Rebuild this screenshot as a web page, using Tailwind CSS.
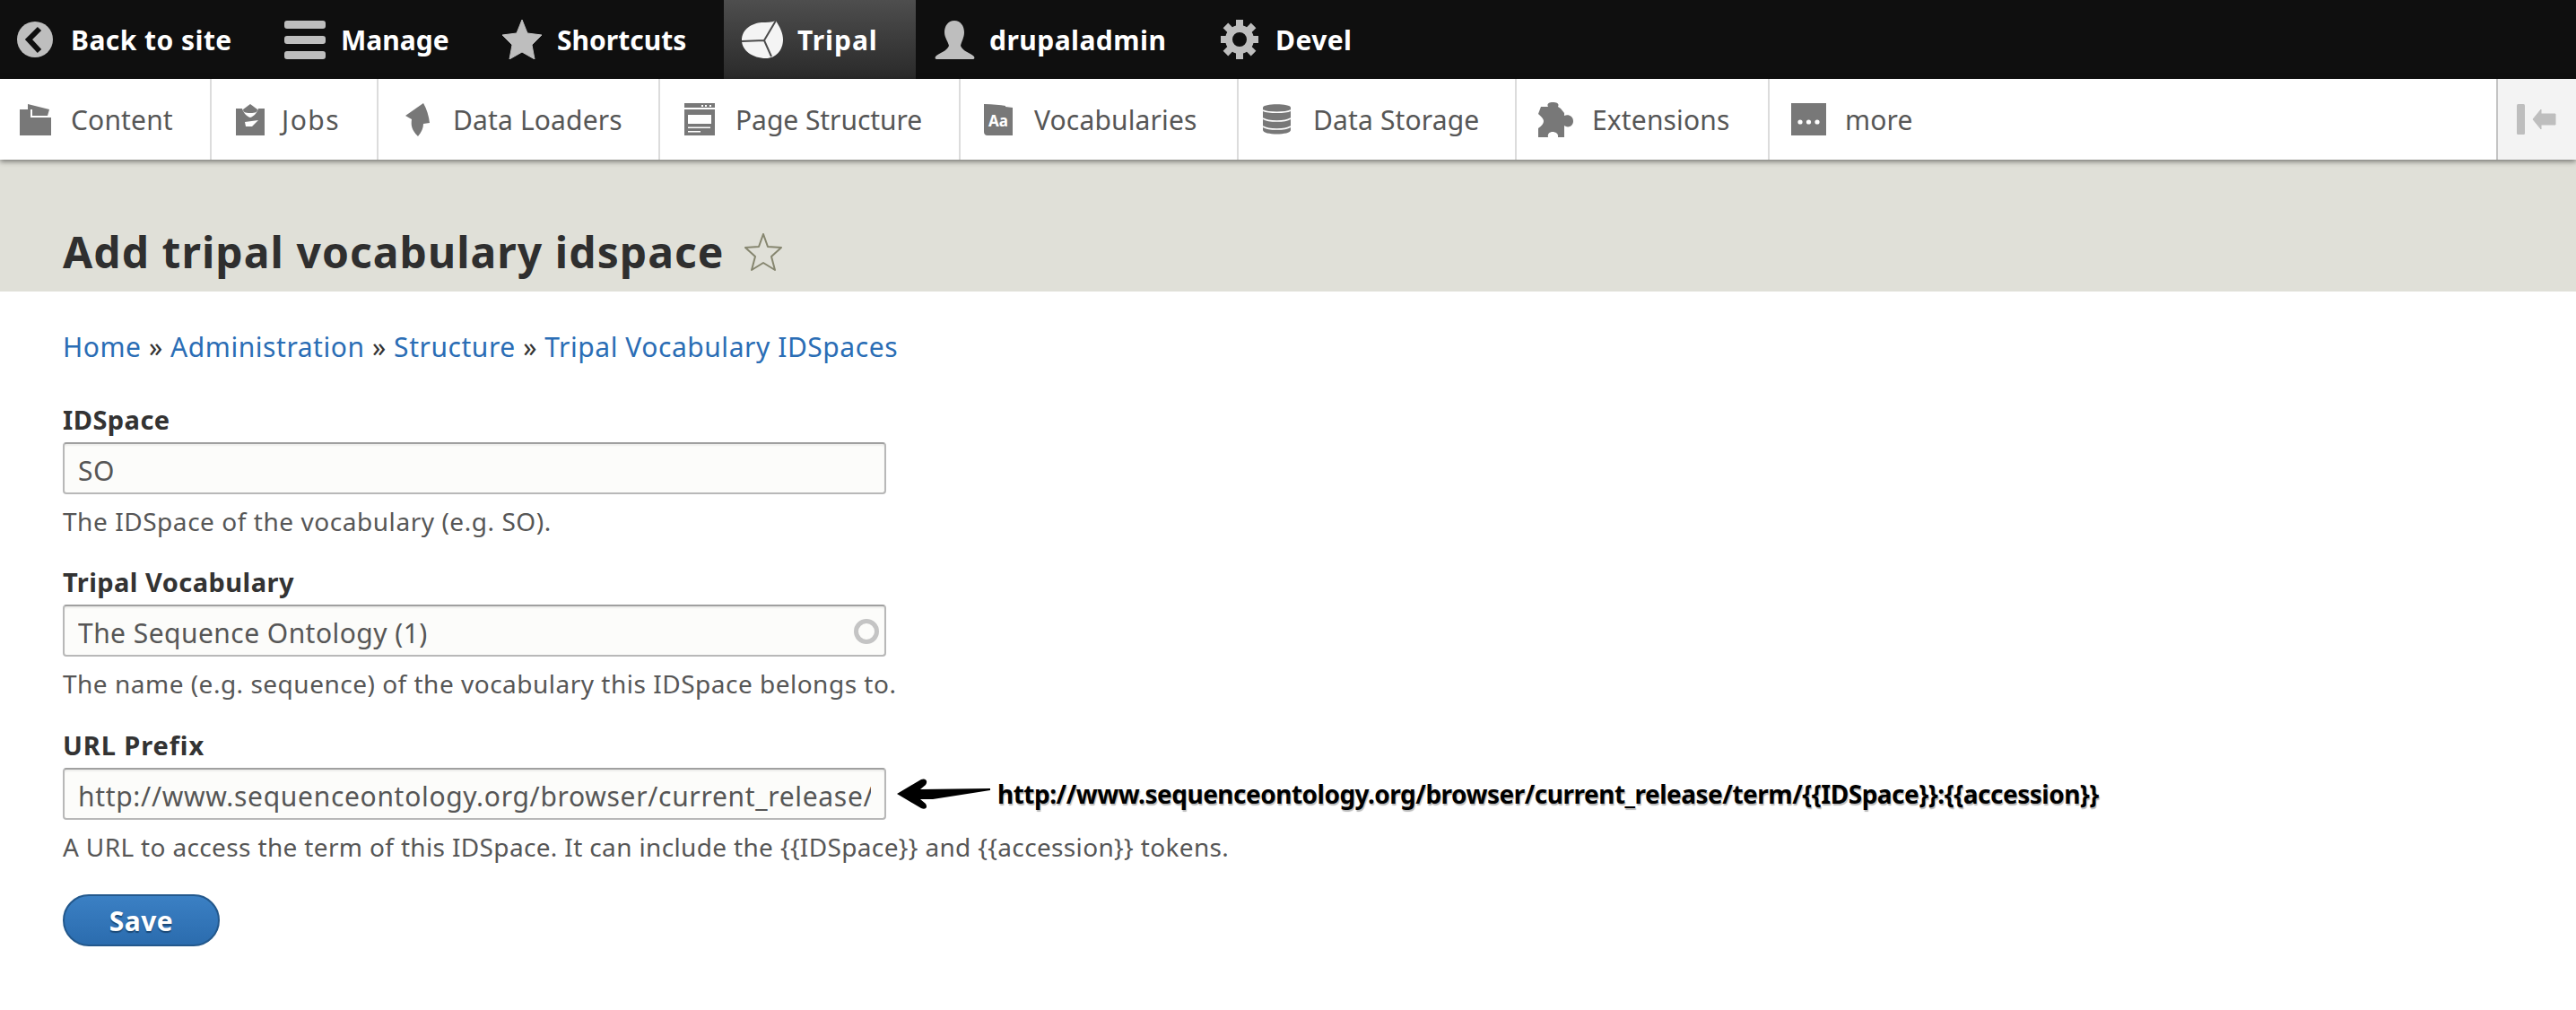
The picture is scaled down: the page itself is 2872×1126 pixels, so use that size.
<!DOCTYPE html>
<html lang="en">
<head>
<meta charset="UTF-8">
<title>Add tripal vocabulary idspace</title>
<script src="https://cdn.jsdelivr.net/npm/@tailwindcss/browser@4"></script>
</head>
<body class="bg-white font-['Noto_Sans',sans-serif] text-[28px] tracking-[0.45px] text-[#333]">

<!-- admin toolbar -->
<nav class="flex h-[88px] bg-[#0f0f0f] font-bold text-[30px] text-white">
  <a class="flex items-center w-[298px] pl-[19px] gap-[20px]">
    <svg class="w-[40px] h-[40px]" viewBox="0 0 40 40"><circle cx="20" cy="20" r="20" fill="#bebebe"/><path d="M25 8 L13 20 L25 33" fill="none" stroke="#0f0f0f" stroke-width="6"/></svg>
    Back to site
  </a>
  <a class="flex items-center w-[243px] pl-[19px] gap-[17px] tracking-normal">
    <svg class="w-[46px] h-[43px]" viewBox="0 0 46 43"><rect width="46" height="9" rx="3" fill="#bebebe"/><rect y="17" width="46" height="9" rx="3" fill="#bebebe"/><rect y="34" width="46" height="9" rx="3" fill="#bebebe"/></svg>
    Manage
  </a>
  <a class="flex items-center w-[266px] pl-[19px] gap-[17px] tracking-normal">
    <svg class="w-[44px] h-[44px]" viewBox="0 0 44 44"><path d="M22 0 L28 15 L44 17 L33 28 L36 44 L22 36 L8 44 L11 28 L0 17 L16 15 Z" fill="#bebebe" stroke="#bebebe" stroke-linejoin="round"/></svg>
    Shortcuts
  </a>
  <a class="flex items-center w-[214px] pl-[20px] gap-[16px] tracking-[0.95px] bg-gradient-to-b from-[#4e4e4e] to-[#2a2a2a]">
    <svg class="w-[46px] h-[42px]" viewBox="0 0 46 42"><path d="M38 0 C43 8 46 14 46 21 C46 33 38 42 27 42 C12 42 0 33 0 22 C0 9 12 3 22 2 C28 2 33 2 38 0 Z" fill="#f4f4f4"/><path d="M0 23 L25 22 L33 40 M25 22 L38 0" fill="none" stroke="#4a4a4a" stroke-width="2"/></svg>
    Tripal
  </a>
  <a class="flex items-center w-[321px] pl-[21px] gap-[16px]">
    <svg class="w-[45px] h-[43px]" viewBox="0 0 45 43"><path d="M22 0 C29 0 33 6 33 13 C33 19 30 23 29 28 C31 34 40 36 44 40 C45 42 44 43 43 43 L2 43 C1 43 0 42 1 40 C5 36 14 34 16 28 C15 23 11 19 11 13 C11 6 15 0 22 0 Z" fill="#bebebe"/></svg>
    drupaladmin
  </a>
  <a class="flex items-center pl-[19px] gap-[19px]">
    <svg class="w-[42px] h-[44px]" viewBox="0 0 42 44">
      <g fill="#bebebe">
        <rect x="17" y="0" width="8" height="10"/><rect x="17" y="34" width="8" height="10"/>
        <rect x="17" y="0" width="8" height="10" transform="rotate(45 21 22)"/><rect x="17" y="34" width="8" height="10" transform="rotate(45 21 22)"/>
        <rect x="17" y="0" width="8" height="10" transform="rotate(90 21 22)"/><rect x="17" y="34" width="8" height="10" transform="rotate(90 21 22)"/>
        <rect x="17" y="0" width="8" height="10" transform="rotate(135 21 22)"/><rect x="17" y="34" width="8" height="10" transform="rotate(135 21 22)"/>
      </g>
      <circle cx="21" cy="22" r="12" fill="none" stroke="#bebebe" stroke-width="8"/>
    </svg>
    Devel
  </a>
</nav>

<!-- tray -->
<div class="relative z-10 flex h-[90px] bg-white text-[30px] tracking-[0.15px] text-[#565656] shadow-[0_2px_6px_rgba(0,0,0,0.5)]">
  <a class="flex items-center w-[236px] pl-[22px] gap-[22px] border-r-2 border-[#dcdcdc]">
    <svg class="w-[35px] h-[35px]" viewBox="0 0 35 35"><path d="M0 6 H12 V15 H35 V35 H0 Z" fill="#787878"/><path d="M9 0 L33 6 L31 13 H14 V6 H9 Z" fill="#787878"/></svg>
    Content
  </a>
  <a class="flex items-center w-[186px] pl-[27px] gap-[19px] tracking-[1.45px] border-r-2 border-[#dcdcdc]">
    <svg class="w-[32px] h-[35px]" viewBox="0 0 32 35"><path d="M0 5 H7 C8 9 12 14 16 15 C20 14 24 9 25 5 H32 V35 H0 Z" fill="#787878"/><path d="M16 0 L24 6 C24 9 22 10 16 10 C10 10 8 9 8 6 Z" fill="#787878"/><path d="M10 20 L25 18 L18 25 L11 25 Z" fill="#fff"/></svg>
    Jobs
  </a>
  <a class="flex items-center w-[314px] pl-[30px] gap-[26px] border-r-2 border-[#dcdcdc]">
    <svg class="w-[27px] h-[37px]" viewBox="0 0 27 37"><path d="M20 0 L0 14 L7 18 C6 25 7 30 14 37 C18 32 20 28 20 23 L27 22 C26 14 24 7 20 0 Z" fill="#787878"/></svg>
    Data Loaders
  </a>
  <a class="flex items-center w-[335px] pl-[27px] gap-[23px] tracking-[-0.05px] border-r-2 border-[#dcdcdc]">
    <svg class="w-[34px] h-[36px]" viewBox="0 0 34 36"><path d="M0 0 H34 V5 H0 Z M0 7 H34 V36 H0 Z" fill="#787878"/><path d="M4 13 H30 V23 H4 Z M4 26.5 H29 V28 H4 Z M4 31 H18 V32.5 H4 Z M19 2 H21 V4 H19 Z M23 2 H25 V4 H23 Z M28 2 H30 V4 H28 Z" fill="#fff"/></svg>
    Page Structure
  </a>
  <a class="flex items-center w-[310px] pl-[26px] gap-[24px] border-r-2 border-[#dcdcdc]">
    <svg class="w-[32px] h-[35px]" viewBox="0 0 32 35"><path d="M0 0 C10 0 18 1 24 2 V3 L32 4 V35 H4 C1 35 0 33 0 31 Z" fill="#787878"/><text x="5" y="25" fill="#fff" font-size="17" font-weight="700" letter-spacing="0">Aa</text></svg>
    Vocabularies
  </a>
  <a class="flex items-center w-[310px] pl-[27px] gap-[25px] border-r-2 border-[#dcdcdc]">
    <svg class="w-[31px] h-[34px]" viewBox="0 0 31 34"><path d="M0 4 C0 -1 31 -1 31 4 V29 C31 35 0 35 0 29 Z" fill="#787878"/><path d="M0 7 C6 10 25 10 31 7 M0 16 C6 20 25 20 31 16 M0 25 C6 29 25 29 31 25" fill="none" stroke="#fff" stroke-width="1.6"/></svg>
    Data Storage
  </a>
  <a class="flex items-center w-[282px] pl-[24px] gap-[21px] border-r-2 border-[#dcdcdc]">
    <svg class="w-[39px] h-[39px]" viewBox="0 0 39 39"><path d="M3 5 H11 C9 1 13 0 16 0 C20 0 24 1 22 5 L25 7 L29 12 L29 15 C33 13 39 15 39 21 C39 27 33 29 29 26 V39 H22 C23 35 19 33 16 33 C13 33 10 35 11 39 H0 V29 C4 26 6 24 6 21 C6 18 3 16 0 13 Z" fill="#787878"/></svg>
    Extensions
  </a>
  <a class="flex items-center pl-[24px] gap-[21px]">
    <svg class="w-[39px] h-[36px]" viewBox="0 0 39 36"><rect width="39" height="36" fill="#787878"/><circle cx="10" cy="21" r="2.6" fill="#fff"/><circle cx="19.5" cy="21" r="2.6" fill="#fff"/><circle cx="29" cy="21" r="2.6" fill="#fff"/></svg>
    more
  </a>
  <div class="ml-auto flex items-center w-[89px] h-full pl-[21px] gap-[9px] bg-[#f3f3f3] border-l-2 border-[#c4c4c4]">
    <svg class="w-[44px] h-[34px]" viewBox="0 0 44 34"><rect width="9" height="34" rx="1.5" fill="#bebebe"/><path d="M18 17 L27 6 V11 H43 V23 H27 V28 Z" fill="#bebebe" stroke="#bebebe" stroke-linejoin="round"/></svg>
  </div>
</div>

<!-- page title -->
<header class="flex items-end h-[147px] px-[70px] pb-[14px] bg-[#e0e0d8]">
  <h1 class="flex items-center gap-[22px] font-bold text-[48px] leading-[60px] tracking-[1.05px] text-[#2f2f2f]">
    Add tripal vocabulary idspace
    <svg class="w-[42px] h-[42px]" viewBox="0 0 42 42"><path d="M21 1 L26 15 L41 16 L30 26 L34 41 L21 33 L8 41 L12 26 L1 16 L16 15 Z" fill="none" stroke="#86866f" stroke-width="2" stroke-linejoin="round"/></svg>
  </h1>
</header>

<main class="px-[70px] pt-[44px]">
  <div class="mb-[45px] text-[30px] leading-[36px] tracking-[0.55px] text-[#333]">
    <a class="text-[#2a6db5]">Home</a> » <a class="text-[#2a6db5]">Administration</a> » <a class="text-[#2a6db5]">Structure</a> » <a class="text-[#2a6db5]">Tripal Vocabulary IDSpaces</a>
  </div>

  <div class="mb-[32px]">
    <label class="block mb-[7px] font-bold text-[29px] leading-[36px]">IDSpace</label>
    <input class="block w-[918px] h-[58px] px-[15px] pt-[4px] bg-[#fcfcfa] border-2 border-[#b8b8b8] border-t-[#a0a0a0] rounded-[4px] text-[30px] text-[#565656] shadow-[inset_0_2px_2px_rgba(0,0,0,0.06)]" value="SO">
    <p class="mt-[12px] leading-[36px] tracking-[0.55px] text-[#565656]">The IDSpace of the vocabulary (e.g. SO).</p>
  </div>

  <div class="mb-[33px]">
    <label class="block mb-[7px] font-bold text-[29px] leading-[36px]">Tripal Vocabulary</label>
    <div class="relative w-[918px]">
      <input class="block w-full h-[58px] px-[15px] pt-[4px] bg-[#fcfcfa] border-2 border-[#b8b8b8] border-t-[#a0a0a0] rounded-[4px] text-[30px] text-[#565656] shadow-[inset_0_2px_2px_rgba(0,0,0,0.06)]" value="The Sequence Ontology (1)">
      <span class="absolute right-[8px] top-[16px] w-[28px] h-[28px] rounded-full border-[5px] border-[#c4c4c4]"></span>
    </div>
    <p class="mt-[12px] leading-[36px] tracking-[0.5px] text-[#565656]">The name (e.g. sequence) of the vocabulary this IDSpace belongs to.</p>
  </div>

  <div class="mb-[35px]">
    <label class="block mb-[7px] font-bold text-[29px] tracking-[0.9px] leading-[36px]">URL Prefix</label>
    <div class="flex items-center">
      <input class="block w-[918px] h-[58px] px-[15px] pt-[4px] bg-[#fcfcfa] border-2 border-[#b8b8b8] border-t-[#a0a0a0] rounded-[4px] text-[30px] tracking-[0.68px] text-[#565656] shadow-[inset_0_2px_2px_rgba(0,0,0,0.06)]" value="http://www.sequenceontology.org/browser/current_release/">
      <svg class="ml-[12px] w-[104px] h-[34px]" viewBox="0 0 104 34"><path d="M0 17 L27 1 C32 -1 35 3 32 7 L26 12 L104 11 V13 L40 23 L26 23 L32 28 C35 33 31 35 27 33 Z" fill="#000"/></svg>
      <span class="ml-[8px] font-bold text-[28px] tracking-[-0.5px] text-black [text-shadow:1px_2px_1px_#bbb]">http://www.sequenceontology.org/browser/current_release/term/{{IDSpace}}:{{accession}}</span>
    </div>
    <p class="mt-[12px] leading-[36px] tracking-[0.35px] text-[#565656]">A URL to access the term of this IDSpace. It can include the {{IDSpace}} and {{accession}} tokens.</p>
  </div>

  <button class="block w-[175px] h-[58px] rounded-[29px] border-2 border-[#23588c] bg-gradient-to-b from-[#3b80c4] to-[#2b6cae] font-bold text-[30px] text-white [text-shadow:0_2px_1px_#1c4a78]">Save</button>
</main>
</body>
</html>
